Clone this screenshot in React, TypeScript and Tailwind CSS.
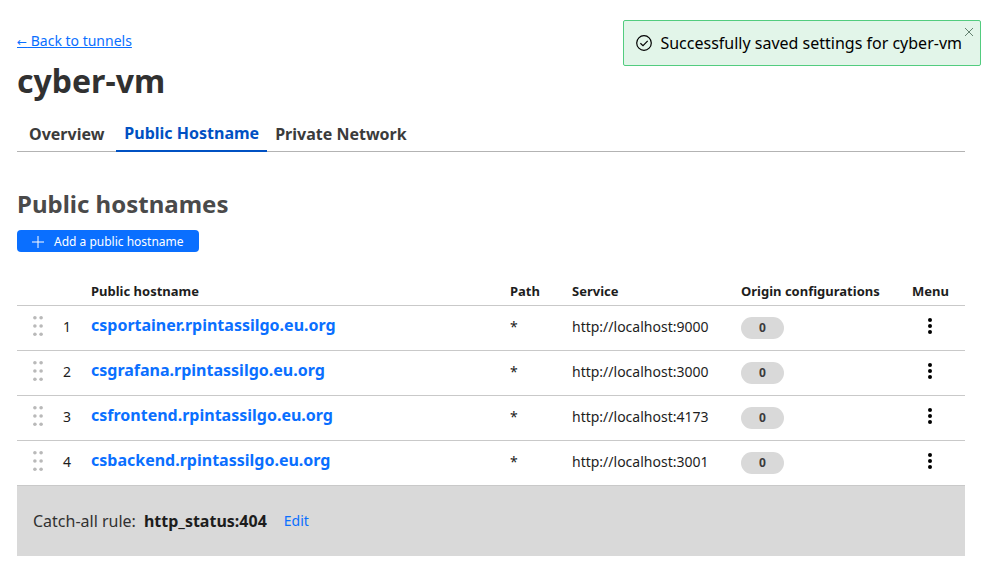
const hostnames = [
  { host: "csportainer.rpintassilgo.eu.org", path: "*", service: "http://localhost:9000", origins: 0 },
  { host: "csgrafana.rpintassilgo.eu.org", path: "*", service: "http://localhost:3000", origins: 0 },
  { host: "csfrontend.rpintassilgo.eu.org", path: "*", service: "http://localhost:4173", origins: 0 },
  { host: "csbackend.rpintassilgo.eu.org", path: "*", service: "http://localhost:3001", origins: 0 },
];

function Toast() {
  return (
    <div
      role="status"
      className="absolute top-5 right-2 flex h-[46px] items-center rounded-[2px] border border-[#52cc7f] bg-[#e2f5e9] pr-[18px] pl-3 text-base text-black"
    >
      <svg className="mr-2 size-4" viewBox="0 0 16 16" fill="none" stroke="currentColor" aria-hidden="true">
        <circle cx="8" cy="8" r="7.3" strokeWidth="1.2" />
        <path d="M4.4 8.2 7 10.6l4.7-4.7" strokeWidth="1.2" />
      </svg>
      <span className="whitespace-nowrap">Successfully saved settings for cyber-vm</span>
      <button type="button" aria-label="Close" className="absolute top-[7px] right-[7px] text-[#567562]">
        <svg className="block size-2" viewBox="0 0 8 8" fill="none" stroke="currentColor" aria-hidden="true">
          <path d="M0 0l8 8M8 0L0 8" strokeWidth="0.9" />
        </svg>
      </button>
    </div>
  );
}

function DragHandle() {
  return (
    <button type="button" aria-label="Reorder" className="block text-[#b9b9b9]">
      <svg className="block h-5 w-[10px]" viewBox="0 0 10 20" fill="currentColor" aria-hidden="true">
        {[1.8, 10, 18.2].map((y) => (
          <g key={y}>
            <circle cx="1.9" cy={y} r="1.8" />
            <circle cx="8.1" cy={y} r="1.8" />
          </g>
        ))}
      </svg>
    </button>
  );
}

function KebabButton() {
  return (
    <button type="button" aria-label="Open menu" className="block text-black">
      <svg className="block h-4 w-1" viewBox="0 0 4 16" fill="currentColor" aria-hidden="true">
        <circle cx="2" cy="2" r="2" />
        <circle cx="2" cy="8" r="2" />
        <circle cx="2" cy="14" r="2" />
      </svg>
    </button>
  );
}

export default function App() {
  return (
    <main className="relative min-h-screen bg-white pt-8 pr-6 pb-5 pl-[17px] font-['Noto_Sans',sans-serif] text-sm text-[#1d1d1d]">
      <Toast />
      <a href="#tunnels" className="block h-[18px] w-fit leading-[18px] text-[#0a6fff] underline">
        <span className="font-['DejaVu_Sans',sans-serif] text-xs leading-none">←</span> Back to tunnels
      </a>
      <h1 className="mt-[11px] text-[32px] leading-10 font-bold text-[#313131]">cyber-vm</h1>

      <nav className="mt-4 flex h-[35px] border-b border-[#b3b3b3] text-base leading-6 font-bold text-[#3b3b3b]">
        <a href="#overview" className="px-3 pt-[5px]">Overview</a>
        <a href="#hostname" aria-current="page" className="-mb-px border-b-2 border-[#0051c3] px-2 pt-1 text-[#0051c3]">
          Public Hostname
        </a>
        <a href="#network" className="px-2 pt-[5px]">Private Network</a>
      </nav>

      <h2 className="mt-9 text-2xl leading-8 font-bold text-[#4a4a4a]">Public hostnames</h2>
      <button
        type="button"
        className="mt-[10px] flex h-[22px] items-center rounded-[4px] bg-[#0a6fff] px-[15px] pt-px text-xs leading-4 text-white"
      >
        <svg className="mr-[10px] size-3" viewBox="0 0 12 12" fill="none" stroke="currentColor" aria-hidden="true">
          <path d="M6 0v12M0 6h12" strokeWidth="1" />
        </svg>
        Add a public hostname
      </button>

      <table className="mt-6 w-full table-fixed border-collapse text-left">
        <colgroup>
          <col className="w-[46px]" />
          <col className="w-[28px]" />
          <col />
          <col className="w-[62px]" />
          <col className="w-[169px]" />
          <col className="w-[171px]" />
          <col className="w-[53px]" />
        </colgroup>
        <thead>
          <tr className="h-[29px] border-b border-[#c9c9c9] text-[13px] leading-5">
            <td />
            <td />
            <th scope="col" className="pt-px font-bold">Public hostname</th>
            <th scope="col" className="pt-px font-bold">Path</th>
            <th scope="col" className="pt-px font-bold">Service</th>
            <th scope="col" className="pt-px font-bold">Origin configurations</th>
            <th scope="col" className="pt-px font-bold">Menu</th>
          </tr>
        </thead>
        <tbody>
          {hostnames.map((row, i) => (
            <tr key={row.host} className="h-[45px] border-b border-[#c9c9c9] leading-5">
              <td className="pb-1 pl-4"><DragHandle /></td>
              <td className="pb-0.5">{i + 1}</td>
              <td className="pb-1.5 text-base leading-6 font-bold">
                <a href={"#" + row.host} className="text-[#0a6fff]">{row.host}</a>
              </td>
              <td className="pb-0.5">{row.path}</td>
              <td className="pb-0.5">{row.service}</td>
              <td>
                <span className="flex h-[22px] w-[43px] items-center justify-center rounded-full bg-[#d9d9d9] text-xs font-bold text-[#3b3b3b]">
                  {row.origins}
                </span>
              </td>
              <td className="pb-1 pl-4"><KebabButton /></td>
            </tr>
          ))}
        </tbody>
      </table>

      <section className="flex h-[70px] items-center bg-[#d9d9d9] px-4 text-base">
        <span className="text-[#313131]">Catch-all rule:</span>
        <strong className="ml-2 font-bold">http_status:404</strong>
        <button type="button" className="ml-[17px] text-sm text-[#0a6fff]">Edit</button>
      </section>
    </main>
  );
}
